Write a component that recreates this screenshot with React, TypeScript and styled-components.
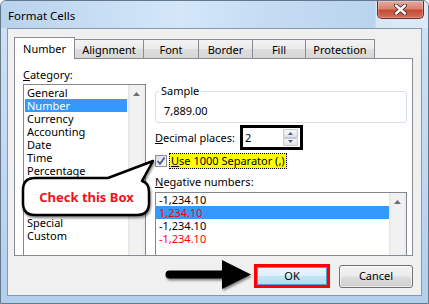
import React from "react";
import styled, { createGlobalStyle } from "styled-components";

const Global = createGlobalStyle`
  html, body { margin: 0; padding: 0; background: #ffffff; overflow: hidden; }
  body { font-family: "Noto Sans", "Open Sans", sans-serif; font-size: 11px; color: #000; }
  #root { width: 429px; height: 304px; }
`;

const Stage = styled.div`
  position: relative;
  width: 429px;
  height: 304px;
  overflow: hidden;
  background: #fff;
`;

const Window = styled.div`
  box-sizing: border-box;
  width: 429px;
  height: 304px;
  border: 1px solid #63778d;
  border-radius: 6px 6px 0 0;
  display: flex;
  flex-direction: column;
  overflow: hidden;
  background: linear-gradient(to bottom, #cfe1f4 0%, #c4daf1 45%, #b2cfec 100%);
`;

const TitleBar = styled.div`
  position: relative;
  flex: none;
  height: 27px;
  box-sizing: border-box;
  padding: 2px 0 0 7px;
  display: flex;
  align-items: center;
  background: linear-gradient(
    90deg,
    #b9d2ec 0%,
    #c7ddf3 22%,
    #d4e7f9 42%,
    #c5dcf3 62%,
    #bad4ee 87.6%,
    #d9e7f5 87.9%,
    #dde9f6 100%
  );
`;

const Title = styled.span`
  font-size: 11.5px;
  color: #000;
`;

const CloseButton = styled.div`
  position: absolute;
  top: 0;
  right: 4px;
  width: 47px;
  height: 18px;
  box-sizing: border-box;
  border: 1px solid #6b2d25;
  border-top: none;
  border-radius: 0 0 5px 5px;
  background: linear-gradient(to bottom, #e9a99d 0%, #d9826f 45%, #c74a32 55%, #d1715c 100%);
  display: flex;
  align-items: center;
  justify-content: center;
  box-shadow: inset 0 0 0 1px rgba(255, 255, 255, 0.25);
`;

const FrameBody = styled.div`
  flex: 1;
  display: flex;
  padding: 0 6px 7px 6px;
`;

const Client = styled.div`
  flex: 1;
  box-sizing: border-box;
  border: 1px solid #8799ad;
  background: #f0f0f0;
  display: flex;
  flex-direction: column;
  padding: 8px 8px 7px 6px;
`;

const TabStrip = styled.div`
  display: flex;
  align-items: flex-end;
  height: 21px;
`;

const Tab = styled.div<{ $active?: boolean; $w: number; $first?: boolean }>`
  box-sizing: border-box;
  width: ${(p) => p.$w}px;
  height: ${(p) => (p.$active ? 22 : 19)}px;
  margin-left: ${(p) => (p.$first ? 0 : -1)}px;
  margin-bottom: ${(p) => (p.$active ? -1 : 0)}px;
  position: relative;
  z-index: ${(p) => (p.$active ? 2 : 1)};
  border: 1px solid #898c95;
  border-bottom: none;
  padding-top: ${(p) => (p.$active ? 4 : 3)}px;
  line-height: 14px;
  text-align: center;
  white-space: nowrap;
  background: ${(p) =>
    p.$active
      ? "#ffffff"
      : "linear-gradient(to bottom, #f3f3f3 0%, #ebebeb 50%, #dedede 51%, #d7d7d7 100%)"};
`;

const Panel = styled.div`
  box-sizing: border-box;
  height: 198px;
  border: 1px solid #898c95;
  background: #fff;
  overflow: hidden;
  display: grid;
  grid-template-columns: 123px 252px;
  column-gap: 9px;
  align-items: start;
  padding: 9px 5px 0 8px;
`;

const Column = styled.div`
  display: flex;
  flex-direction: column;
`;

const Label = styled.div<{ $mt?: number; $w?: number }>`
  line-height: 14px;
  margin-top: ${(p) => p.$mt ?? 0}px;
  width: ${(p) => (p.$w ? `${p.$w}px` : "auto")};
  flex: none;
  white-space: nowrap;
`;

const ListBox = styled.div<{ $h: number; $mt: number }>`
  box-sizing: border-box;
  height: ${(p) => p.$h}px;
  margin-top: ${(p) => p.$mt}px;
  border: 1px solid #828790;
  background: #fff;
  display: flex;
`;

const ListItems = styled.div<{ $pt: number }>`
  flex: 1;
  padding-top: ${(p) => p.$pt}px;
  display: flex;
  flex-direction: column;
`;

const ListItem = styled.div<{
  $selected?: boolean;
  $red?: boolean;
  $covered?: boolean;
  $indent: number;
  $mx: number;
}>`
  height: 13px;
  line-height: 13px;
  margin: 0 ${(p) => p.$mx}px;
  padding-left: ${(p) => p.$indent}px;
  white-space: nowrap;
  visibility: ${(p) => (p.$covered ? "hidden" : "visible")};
  background: ${(p) => (p.$selected ? "#3399ff" : "transparent")};
  color: ${(p) => (p.$red ? "#ff0000" : p.$selected ? "#ffffff" : "#000000")};
`;

const ScrollTrack = styled.div`
  flex: none;
  width: 17px;
  display: flex;
  justify-content: center;
  padding-top: 7px;
  box-sizing: border-box;
  background: linear-gradient(90deg, #e3e3e3 0%, #f1f1f1 15%, #f1f1f1 85%, #e9e9e9 100%);
`;

const Fieldset = styled.fieldset`
  margin: 16px 0 0 0;
  padding: 6px 4px 4px 3px;
  border: 1px solid #d5dfe5;
  border-radius: 3px;
  min-width: 0;
`;

const Legend = styled.legend`
  padding: 0 2px;
  line-height: 14px;
`;

const SampleValue = styled.div`
  line-height: 14px;
  padding-left: 5px;
`;

const Row = styled.div<{ $mt: number; $h: number; $gap?: number }>`
  display: flex;
  align-items: center;
  margin-top: ${(p) => p.$mt}px;
  height: ${(p) => p.$h}px;
  gap: ${(p) => p.$gap ?? 0}px;
`;

const Spinner = styled.div`
  box-sizing: border-box;
  width: 63px;
  height: 25px;
  border: 3px solid #000;
  background: #fff;
  display: flex;
`;

const SpinValue = styled.div`
  flex: 1;
  padding-left: 2px;
  line-height: 19px;
`;

const SpinButtons = styled.div`
  width: 15px;
  display: flex;
  flex-direction: column;
  padding: 1px 2px 1px 0;
`;

const SpinBtn = styled.div`
  flex: 1;
  box-sizing: border-box;
  border: 1px solid #c2c8d0;
  border-radius: 1px;
  background: linear-gradient(to bottom, #f7f7f7 0%, #eceef0 50%, #dfe2e6 100%);
  display: flex;
  align-items: center;
  justify-content: center;
`;

const CheckBox = styled.span`
  box-sizing: border-box;
  width: 12px;
  height: 12px;
  border: 1px solid #8e8f8f;
  background: linear-gradient(135deg, #d8d8d8 0%, #f4f4f4 70%, #ffffff 100%);
  display: inline-flex;
  align-items: center;
  justify-content: center;
  flex: none;
`;

const HighlightLabel = styled.span`
  box-sizing: border-box;
  height: 16px;
  line-height: 14px;
  padding: 0 1px;
  background: #ffff00;
  border: 1px dotted #000;
  white-space: nowrap;
`;

const ButtonRow = styled.div`
  display: flex;
  justify-content: flex-end;
  align-items: center;
  gap: 9px;
  margin-top: 8px;
  height: 24px;
`;

const RedFrame = styled.div`
  box-sizing: border-box;
  width: 76px;
  height: 24px;
  border: 3px solid #ff0000;
  display: flex;
`;

const OkButton = styled.div`
  flex: 1;
  box-sizing: border-box;
  border: 1px solid #5c9ccc;
  background: linear-gradient(to bottom, #eaf6fd 0%, #dcf0fb 48%, #c1e4f7 52%, #b3dcf4 100%);
  display: flex;
  align-items: center;
  justify-content: center;
  line-height: 14px;
  font-weight: 400;
`;

const CancelButton = styled.div`
  box-sizing: border-box;
  width: 74px;
  height: 23px;
  border: 1px solid #707070;
  border-radius: 3px;
  background: linear-gradient(to bottom, #f2f2f2 0%, #ebebeb 49%, #dddddd 51%, #cfcfcf 100%);
  box-shadow: inset 0 0 0 1px rgba(255, 255, 255, 0.6);
  display: flex;
  align-items: center;
  justify-content: center;
  line-height: 14px;
`;

const Overlay = styled.svg`
  position: absolute;
  left: 0;
  top: 0;
  width: 429px;
  height: 304px;
  pointer-events: none;
  z-index: 10;
`;

const CalloutText = styled.div`
  position: absolute;
  left: 23px;
  top: 178px;
  width: 127px;
  height: 37px;
  display: flex;
  align-items: center;
  justify-content: center;
  font-weight: 700;
  font-size: 13px;
  color: #ee1122;
  z-index: 11;
  white-space: nowrap;
`;

const UpArrow = () => (
  <svg width="7" height="4" viewBox="0 0 7 4">
    <polygon points="3.5,0 7,4 0,4" fill="#6e6e6e" />
  </svg>
);

const SpinArrow = ({ down }: { down?: boolean }) => (
  <svg width="5" height="3" viewBox="0 0 5 3">
    <polygon points={down ? "0,0 5,0 2.5,3" : "2.5,0 5,3 0,3"} fill="#4c5f86" />
  </svg>
);

const categories: { name: string; covered?: boolean }[] = [
  { name: "General" },
  { name: "Number" },
  { name: "Currency" },
  { name: "Accounting" },
  { name: "Date" },
  { name: "Time" },
  { name: "Percentage" },
  { name: "Fraction", covered: true },
  { name: "Scientific", covered: true },
  { name: "Text", covered: true },
  { name: "Special" },
  { name: "Custom" },
];

const negatives: { text: string; red: boolean }[] = [
  { text: "-1,234.10", red: false },
  { text: "1,234.10", red: true },
  { text: "-1,234.10", red: false },
  { text: "-1,234.10", red: true },
];

const tabs: { name: string; w: number }[] = [
  { name: "Number", w: 61 },
  { name: "Alignment", w: 70 },
  { name: "Font", w: 56 },
  { name: "Border", w: 55 },
  { name: "Fill", w: 54 },
  { name: "Protection", w: 70 },
];

export default function App() {
  return (
    <Stage>
      <Global />
      <Window>
        <TitleBar>
          <Title>Format Cells</Title>
          <CloseButton>
            <svg width="13" height="11" viewBox="0 0 13 11">
              <path
                d="M2 1.5 L11 9.5 M11 1.5 L2 9.5"
                stroke="#4a2a28"
                strokeWidth="4.2"
                strokeLinecap="round"
              />
              <path
                d="M2 1.5 L11 9.5 M11 1.5 L2 9.5"
                stroke="#ffffff"
                strokeWidth="2.4"
                strokeLinecap="round"
              />
            </svg>
          </CloseButton>
        </TitleBar>
        <FrameBody>
          <Client>
            <TabStrip>
              {tabs.map((t, i) => (
                <Tab key={t.name} $w={t.w} $active={i === 0} $first={i === 0}>
                  {t.name}
                </Tab>
              ))}
            </TabStrip>
            <Panel>
              <Column>
                <Label>
                  <u>C</u>ategory:
                </Label>
                <ListBox $h={174} $mt={2}>
                  <ListItems $pt={1}>
                    {categories.map((c) => (
                      <ListItem
                        key={c.name}
                        $selected={c.name === "Number"}
                        $covered={c.covered}
                        $indent={2}
                        $mx={1}
                      >
                        {c.name}
                      </ListItem>
                    ))}
                  </ListItems>
                  <ScrollTrack>
                    <UpArrow />
                  </ScrollTrack>
                </ListBox>
              </Column>
              <Column>
                <Fieldset>
                  <Legend>Sample</Legend>
                  <SampleValue>7,889.00</SampleValue>
                </Fieldset>
                <Row $mt={2} $h={25}>
                  <Label $w={85}>
                    <u>D</u>ecimal places:
                  </Label>
                  <Spinner>
                    <SpinValue>2</SpinValue>
                    <SpinButtons>
                      <SpinBtn>
                        <SpinArrow />
                      </SpinBtn>
                      <SpinBtn>
                        <SpinArrow down />
                      </SpinBtn>
                    </SpinButtons>
                  </Spinner>
                </Row>
                <Row $mt={3} $h={16} $gap={2}>
                  <CheckBox>
                    <svg width="10" height="10" viewBox="0 0 10 10">
                      <path
                        d="M1.5 5 L4 7.8 L8.6 1.6"
                        stroke="#3f5794"
                        strokeWidth="1.7"
                        fill="none"
                      />
                    </svg>
                  </CheckBox>
                  <HighlightLabel>
                    <u>U</u>se 1000 Separator (,)
                  </HighlightLabel>
                </Row>
                <Label $mt={6}>
                  <u>N</u>egative numbers:
                </Label>
                <ListBox $h={66} $mt={3}>
                  <ListItems $pt={0}>
                    {negatives.map((n, i) => (
                      <ListItem key={i} $selected={i === 1} $red={n.red} $indent={3} $mx={0}>
                        {n.text}
                      </ListItem>
                    ))}
                  </ListItems>
                  <ScrollTrack>
                    <UpArrow />
                  </ScrollTrack>
                </ListBox>
              </Column>
            </Panel>
            <ButtonRow>
              <RedFrame>
                <OkButton>OK</OkButton>
              </RedFrame>
              <CancelButton>Cancel</CancelButton>
            </ButtonRow>
          </Client>
        </FrameBody>
      </Window>
      <Overlay viewBox="0 0 429 304">
        <defs>
          <filter id="sh" x="-20%" y="-20%" width="140%" height="160%">
            <feDropShadow dx="1" dy="2" stdDeviation="1.2" floodColor="#000" floodOpacity="0.45" />
          </filter>
        </defs>
        <path
          d="M 35 178 L 108 178 L 153 161 L 142 181 Q 149 183 149 192 L 149 203 Q 149 215 137 215 L 35 215 Q 23 215 23 203 L 23 190 Q 23 178 35 178 Z"
          fill="#ffffff"
          stroke="#000000"
          strokeWidth="2.5"
          strokeLinejoin="round"
          filter="url(#sh)"
        />
        <path
          d="M 169.5 270.5 L 222 270.5 L 222 260 L 251 274.5 L 222 289 L 222 278.5 L 169.5 278.5 A 4 4 0 0 1 169.5 270.5 Z"
          fill="#000000"
          filter="url(#sh)"
        />
      </Overlay>
      <CalloutText>Check this Box</CalloutText>
    </Stage>
  );
}
